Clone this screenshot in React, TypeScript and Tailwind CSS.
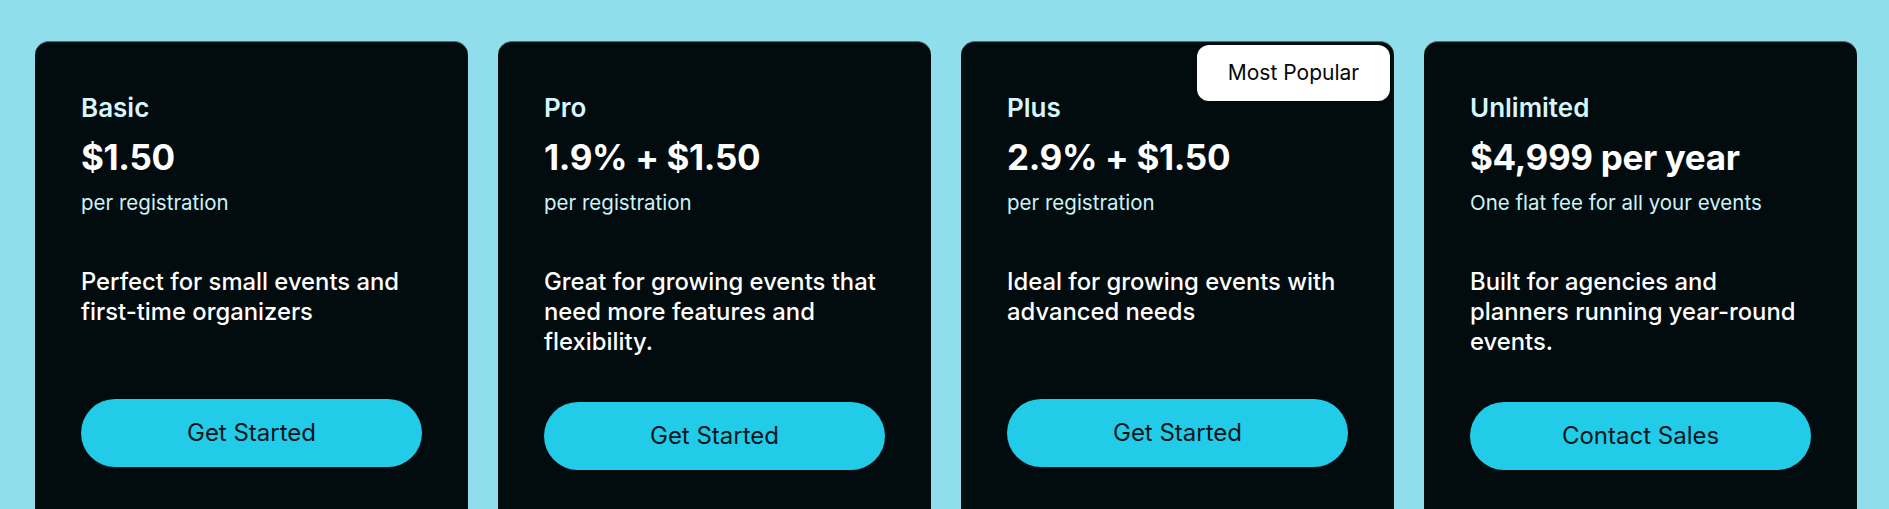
import React from "react";

type Plan = {
  name: string;
  price: string;
  sub: string;
  desc: string;
  cta: string;
  popular?: boolean;
};

const plans: Plan[] = [
  {
    name: "Basic",
    price: "$1.50",
    sub: "per registration",
    desc: "Perfect for small events and first-time organizers",
    cta: "Get Started",
  },
  {
    name: "Pro",
    price: "1.9% + $1.50",
    sub: "per registration",
    desc: "Great for growing events that need more features and flexibility.",
    cta: "Get Started",
  },
  {
    name: "Plus",
    price: "2.9% + $1.50",
    sub: "per registration",
    desc: "Ideal for growing events with advanced needs",
    cta: "Get Started",
    popular: true,
  },
  {
    name: "Unlimited",
    price: "$4,999 per year",
    sub: "One flat fee for all your events",
    desc: "Built for agencies and planners running year-round events.",
    cta: "Contact Sales",
  },
];

function Card({ plan }: { plan: Plan }) {
  return (
    <div className="relative h-[500px] rounded-[14px] border-t border-[#5a6a70] bg-[#020b0e] px-[46px] pt-[50px]">
      {plan.popular && (
        <div className="absolute right-[4px] top-[3px] flex h-[56px] w-[193px] items-center justify-center rounded-[12px] bg-white text-[21px] font-normal text-[#05080a]">
          Most Popular
        </div>
      )}
      <div className="text-[26px] font-semibold leading-[32px] text-[#d6f6fb]">{plan.name}</div>
      <div className="mt-[13px] text-[35px] font-bold leading-[40px] tracking-[-0.01em] text-white">
        {plan.price}
      </div>
      <div className="mt-[12px] text-[20.5px] leading-[28px] text-[#cdf3f9]">{plan.sub}</div>
      <div className="mt-[50px] mb-[45px] min-h-[87px] text-[23.8px] font-medium leading-[30px] text-white">
        {plan.desc}
      </div>
      <button className="flex h-[68px] w-full items-center justify-center rounded-full bg-[#22cce8] text-[24px] font-normal text-[#06161b]">
        {plan.cta}
      </button>
    </div>
  );
}

export default function App() {
  return (
    <div
      className="h-[509px] overflow-hidden bg-[#90deeb] pl-[35px] pr-[32px] pt-[41px]"
      style={{ fontFamily: "Inter, 'Noto Sans', sans-serif" }}
    >
      <div className="grid grid-cols-4 gap-[30px]">
        {plans.map((p) => (
          <Card key={p.name} plan={p} />
        ))}
      </div>
    </div>
  );
}
